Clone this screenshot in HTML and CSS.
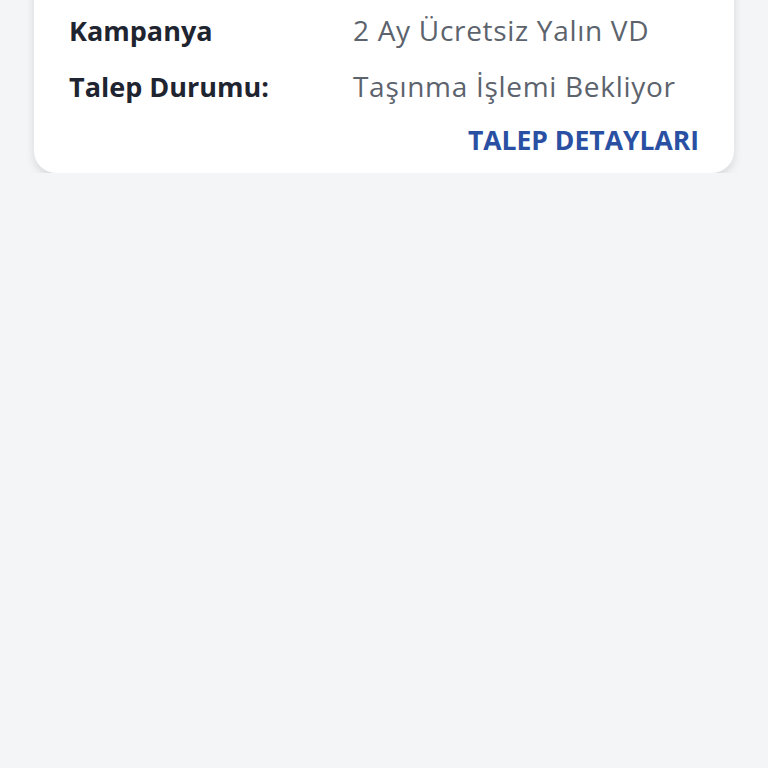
FILE: index.html
```html
<!DOCTYPE html>
<html lang="tr">
<head>
    <meta charset="UTF-8">
    <meta name="viewport" content="width=device-width, initial-scale=1.0">
    <title>Talep</title>
    <link rel="stylesheet" href="styles.css">
</head>
<body>
    <div class="request-card">
        <div class="info-row">
            <span class="info-label">Kampanya Tipi</span>
            <span class="info-value">Yeni Bağlantı</span>
        </div>
        <div class="info-row">
            <span class="info-label">Kampanya</span>
            <span class="info-value">2 Ay Ücretsiz Yalın VD</span>
        </div>
        <div class="info-row">
            <span class="info-label">Talep Durumu:</span>
            <span class="info-value">Taşınma İşlemi Bekliyor</span>
        </div>
        <div class="card-actions">
            <a href="#" class="detail-link">TALEP DETAYLARI</a>
        </div>
    </div>
</body>
</html>
```

FILE: styles.css
```css
body {
    margin: 0;
    background-color: #f4f5f7;
    font-family: "Open Sans", "Noto Sans", sans-serif;
}
.request-card {
    margin: -74px 34px 0 34px;
    padding: 20px 35px 16px 35px;
    background-color: #ffffff;
    border-radius: 22px;
    box-shadow: 0 4px 10px rgba(0, 0, 0, 0.12);
}
.info-row {
    display: grid;
    grid-template-columns: 284px 1fr;
    height: 56px;
    align-items: center;
    font-size: 27px;
    white-space: nowrap;
}
.info-label {
    font-weight: bold;
    color: #1f2530;
}
.info-value {
    font-size: 28px;
    letter-spacing: 0.7px;
    color: #5c636d;
}
.card-actions {
    display: flex;
    justify-content: flex-end;
    margin-top: 9px;
    line-height: 34px;
}
.detail-link {
    font-size: 26.5px;
    font-weight: bold;
    color: #2a50a3;
    text-decoration: none;
}
```
